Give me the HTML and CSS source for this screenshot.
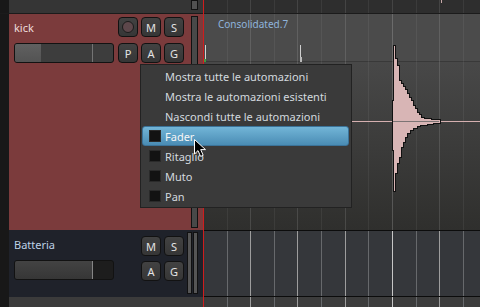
FILE: index.html
```html
<!DOCTYPE html>
<html lang="it">
<head>
  <meta charset="UTF-8" />
  <meta name="viewport" content="width=device-width, initial-scale=1.0" />
  <title>Editor – tracce</title>
  <link rel="stylesheet" href="styles.css">
</head>
<body>
<div class="editor">

  <div class="row row-top">
    <div class="strip"></div>
    <div class="head head-top"><div class="meter meter-stub"></div></div>
    <div class="lane lane-top">
      <svg width="277" height="13" viewBox="203 0 277 13">
        <line class="mn" x1="227.5" y1="0" x2="227.5" y2="13"/>
        <line class="mj" x1="250.5" y1="0" x2="250.5" y2="13"/>
        <line class="mn" x1="274.5" y1="0" x2="274.5" y2="13"/>
        <line class="mj" x1="297.5" y1="0" x2="297.5" y2="13"/>
        <line class="mn" x1="321.5" y1="0" x2="321.5" y2="13"/>
        <line class="mj" x1="345.5" y1="0" x2="345.5" y2="13"/>
        <line class="mn" x1="368.5" y1="0" x2="368.5" y2="13"/>
        <line class="br" x1="392.5" y1="0" x2="392.5" y2="13"/>
        <line class="mn" x1="416.5" y1="0" x2="416.5" y2="13"/>
        <line class="mj" x1="439.5" y1="0" x2="439.5" y2="13"/>
        <line class="mn" x1="463.5" y1="0" x2="463.5" y2="13"/>
        <rect x="441" y="0" width="1" height="3" fill="#c9a9a9"/>
      </svg>
    </div>
  </div>

  <div class="row row-kick">
    <div class="strip"></div>
    <div class="head head-kick">
      <div class="info">
        <div class="name name-kick">kick</div>
        <div class="fader">
          <div class="fader-fill" style="width: 26px"></div>
          <div class="fader-unity"></div>
        </div>
      </div>
      <div class="btns">
        <span class="btn"><span class="rec-dot"></span></span>
        <span class="btn">M</span>
        <span class="btn">S</span>
        <span class="btn">P</span>
        <span class="btn">A</span>
        <span class="btn">G</span>
      </div>
      <div class="meter meter-kick"></div>
    </div>
    <div class="lane lane-kick">
      <svg width="277" height="216" viewBox="203 14 277 216">
        <defs>
          <linearGradient id="regionFade" x1="0" y1="0" x2="0" y2="1">
            <stop offset="0" stop-color="#484848"/>
            <stop offset="1" stop-color="#2f2f2d"/>
          </linearGradient>
        </defs>
        <rect x="203" y="14" width="277" height="47" fill="#4b4b4b"/>
        <rect x="203" y="61" width="277" height="1" fill="#393939"/>
        <rect x="203" y="62" width="277" height="168" fill="url(#regionFade)"/>
        <line class="mn" x1="227.5" y1="14" x2="227.5" y2="230"/>
        <line class="mj" x1="250.5" y1="14" x2="250.5" y2="230"/>
        <line class="mn" x1="274.5" y1="14" x2="274.5" y2="230"/>
        <line class="mj" x1="297.5" y1="14" x2="297.5" y2="230"/>
        <line class="mn" x1="321.5" y1="14" x2="321.5" y2="230"/>
        <line class="mj" x1="345.5" y1="14" x2="345.5" y2="230"/>
        <line class="mn" x1="368.5" y1="14" x2="368.5" y2="230"/>
        <line class="br" x1="392.5" y1="14" x2="392.5" y2="230"/>
        <line class="mn" x1="416.5" y1="14" x2="416.5" y2="230"/>
        <line class="mj" x1="439.5" y1="14" x2="439.5" y2="230"/>
        <line class="mn" x1="463.5" y1="14" x2="463.5" y2="230"/>
        <rect x="205" y="45" width="1" height="15" fill="#d2d2d2"/>
        <rect x="204" y="59" width="2" height="3" fill="#3e9c3e"/>
        <rect x="300" y="45" width="1" height="17" fill="#cfcfcf"/>
        <rect x="300" y="57" width="2" height="5" fill="#bababa"/>
        <rect x="203" y="121" width="277" height="1" fill="#d6b0b0"/>
        <path class="wave" d="M392 100 H393 V45 H395 V58 H397 V65 H399 V80 H401 V83 H403 V86 H405 V89 H407 V93 H409 V97 H411 V100 H413 V105 H415 V108 H417 V112 H419 V114 H421 V117 H424 V118 H431 V119 H440 V123 H433 V124 H427 V125 H420 V126 H417 V128 H413 V130 H410 V133 H407 V137 H405 V142 H403 V147 H401 V157 H399 V163 H397 V173 H395 V191 H393 V150 H392 Z"/>
        <rect x="393" y="121" width="46" height="1" fill="#7c7474"/>
      </svg>
      <span class="region-name">Consolidated.7</span>
    </div>
  </div>

  <div class="row row-bus">
    <div class="strip"></div>
    <div class="head head-bus">
      <div class="info">
        <div class="name name-bus">Batteria</div>
        <div class="fader fader-bus">
          <div class="fader-fill" style="width: 77px"></div>
          <div class="fader-unity"></div>
        </div>
      </div>
      <div class="btns btns-bus">
        <span class="btn">M</span>
        <span class="btn">S</span>
        <span class="btn">A</span>
        <span class="btn">G</span>
      </div>
      <div class="meters">
        <div class="meter meter-bus"></div>
        <div class="meter meter-bus"></div>
      </div>
    </div>
    <div class="lane lane-bus">
      <svg width="277" height="65" viewBox="203 231 277 65">
        <line class="mn" x1="227.5" y1="231" x2="227.5" y2="296"/>
        <line class="mj" x1="250.5" y1="231" x2="250.5" y2="296"/>
        <line class="mn" x1="274.5" y1="231" x2="274.5" y2="296"/>
        <line class="mj" x1="297.5" y1="231" x2="297.5" y2="296"/>
        <line class="mn" x1="321.5" y1="231" x2="321.5" y2="296"/>
        <line class="mj" x1="345.5" y1="231" x2="345.5" y2="296"/>
        <line class="mn" x1="368.5" y1="231" x2="368.5" y2="296"/>
        <line class="br" x1="392.5" y1="231" x2="392.5" y2="296"/>
        <line class="mn" x1="416.5" y1="231" x2="416.5" y2="296"/>
        <line class="mj" x1="439.5" y1="231" x2="439.5" y2="296"/>
        <line class="mn" x1="463.5" y1="231" x2="463.5" y2="296"/>
      </svg>
    </div>
  </div>

  <div class="row row-bottom">
    <div class="strip"></div>
    <div class="head head-bottom"></div>
    <div class="lane lane-bottom">
      <svg width="277" height="10" viewBox="203 297 277 10">
        <line class="mn" x1="227.5" y1="297" x2="227.5" y2="307"/>
        <line class="mj" x1="250.5" y1="297" x2="250.5" y2="307"/>
        <line class="mn" x1="274.5" y1="297" x2="274.5" y2="307"/>
        <line class="mj" x1="297.5" y1="297" x2="297.5" y2="307"/>
        <line class="mn" x1="321.5" y1="297" x2="321.5" y2="307"/>
        <line class="mj" x1="345.5" y1="297" x2="345.5" y2="307"/>
        <line class="mn" x1="368.5" y1="297" x2="368.5" y2="307"/>
        <line class="br" x1="392.5" y1="297" x2="392.5" y2="307"/>
        <line class="mn" x1="416.5" y1="297" x2="416.5" y2="307"/>
        <line class="mj" x1="439.5" y1="297" x2="439.5" y2="307"/>
        <line class="mn" x1="463.5" y1="297" x2="463.5" y2="307"/>
      </svg>
    </div>
  </div>

  <div class="playhead"></div>

  <div class="menu">
    <div class="menu-item">Mostra tutte le automazioni</div>
    <div class="menu-item">Mostra le automazioni esistenti</div>
    <div class="menu-item">Nascondi tutte le automazioni</div>
    <div class="menu-item check-item active"><span class="check"></span>Fader</div>
    <div class="menu-item check-item"><span class="check"></span>Ritaglio</div>
    <div class="menu-item check-item"><span class="check"></span>Muto</div>
    <div class="menu-item check-item"><span class="check"></span>Pan</div>
  </div>

  <svg class="cursor" width="15" height="20" viewBox="0 0 15 20">
    <path d="M1.5 1.5 V16 L5 12.6 L7.6 18.4 L10.2 17.3 L7.7 11.6 H12.5 Z" fill="#000" stroke="#fff" stroke-width="1" stroke-linejoin="round"/>
  </svg>

</div>
</body>
</html>
```

FILE: styles.css
```css
body { margin: 0; background: #181818; font-family: "Noto Sans", "Open Sans", sans-serif; overflow: hidden; }
.editor { position: relative; width: 480px; height: 307px; display: flex; flex-direction: column; }

.row { display: flex; flex: none; }
.row-top { height: 13px; border-bottom: 1px solid #1b1b1b; }
.row-kick { height: 216px; }
.row-bus { height: 67px; }
.row-bottom { flex: 1; }

.strip { width: 9px; flex: none; background: #181818; }
.head { width: 194px; flex: none; display: flex; align-items: flex-start; box-sizing: border-box; }
.lane { flex: 1; position: relative; overflow: hidden; }
.lane svg { display: block; }

.head-top { background: #353535; justify-content: flex-end; padding-right: 5px; }
.head-kick { background: #7b3b3c; padding-left: 5px; }
.head-bus { background: #1f222a; padding-left: 5px; }
.head-bottom { background: #3b3b3b; }

/* track header */
.info { width: 100px; }
.head-kick .info { margin-top: 3px; }
.head-bus .info { margin-top: 6px; }
.name { font-size: 11px; white-space: nowrap; }
.name-kick { height: 26px; line-height: 22px; color: #eddcdc; }
.name-bus { height: 24px; line-height: 18px; color: #bdd1e5; }

.fader { position: relative; width: 100px; height: 20px; box-sizing: border-box; border: 1px solid #121212; border-radius: 3px; background: #3d3d3d; overflow: hidden; }
.fader-fill { height: 100%; background: linear-gradient(#606060, #535353); }
.fader-unity { position: absolute; left: 77px; top: 0; bottom: 0; width: 1px; background: #747474; }
.fader-bus { background: #1d1d1d; }
.fader-bus .fader-fill { background: linear-gradient(#434343, #363636); }
.fader-bus .fader-unity { background: #858585; }

.btns { display: grid; grid-template-columns: repeat(3, 20px); grid-auto-rows: 20px; gap: 6px 3px; margin-left: 4px; margin-top: 3px; }
.btns-bus { grid-template-columns: repeat(2, 20px); gap: 5px 3px; margin-left: 27px; margin-top: 6px; }
.btn { box-sizing: border-box; border: 1px solid #121212; border-radius: 4px; background: linear-gradient(#424242, #363636); color: #e4e4e4; font-size: 11px; line-height: 1; display: flex; align-items: center; justify-content: center; }
.rec-dot { width: 12px; height: 12px; box-sizing: border-box; border-radius: 50%; border: 1px solid #1b1b1b; background: #5d474b; }

.meter { box-sizing: border-box; border: 1px solid #111; background: #484848; }
.meter-stub { width: 7px; height: 10px; background: #515151; }
.meter-kick { width: 7px; height: 212px; margin: 2px 0 0 7px; }
.meters { display: flex; gap: 1px; margin: 2px 0 0 3px; }
.meter-bus { width: 5px; height: 62px; background: #555; }

/* timeline lanes */
.lane-top { background: #2e2e2e; }
.lane-top .mn { stroke: #3b3b3b; }
.lane-top .mj, .lane-top .br { stroke: #444; }

.lane-kick .mn { stroke: rgba(255, 255, 255, 0.06); }
.lane-kick .mj { stroke: rgba(255, 255, 255, 0.12); }
.lane-kick .br { stroke: rgba(255, 255, 255, 0.18); }
.wave { fill: #d8b5b5; stroke: #111; stroke-width: 1; shape-rendering: crispEdges; }
.region-name { position: absolute; left: 15px; top: 4px; font-size: 10px; line-height: 12px; color: #8fb4dc; white-space: nowrap; }

.lane-bus { background: #35373b; border-top: 1px solid #0c0c0c; border-bottom: 1px solid #0c0c0c; }
.lane-bottom { background: #3c3c3c; }
.lane-bus .mn, .lane-bottom .mn { stroke: #67696c; }
.lane-bus .mj, .lane-bottom .mj { stroke: #9d9d9d; }
.lane-bus .br, .lane-bottom .br { stroke: #c6c6c6; }

.playhead { position: absolute; left: 203px; top: 0; bottom: 0; width: 1px; background: #cf1d1d; }

/* automation menu */
.menu { position: absolute; left: 140px; top: 64px; width: 212px; box-sizing: border-box; border: 1px solid #222; background: #3a3a3a; padding: 1px 0; }
.menu-item { height: 20px; box-sizing: border-box; margin: 0 2px 0 1px; padding-left: 23px; display: flex; align-items: center; font-size: 11px; color: #d3d9df; white-space: nowrap; }
.check-item { padding-left: 7px; }
.check { width: 12px; height: 12px; box-sizing: border-box; margin-right: 4px; background: #121212; border: 1px solid #2a2a2a; }
.menu-item.active { padding-left: 6px; border: 1px solid #3b7399; border-radius: 3px; background: linear-gradient(#72b5d7, #4a8cb4); color: #f6f6f6; }

.cursor { position: absolute; left: 193px; top: 138px; }
```
